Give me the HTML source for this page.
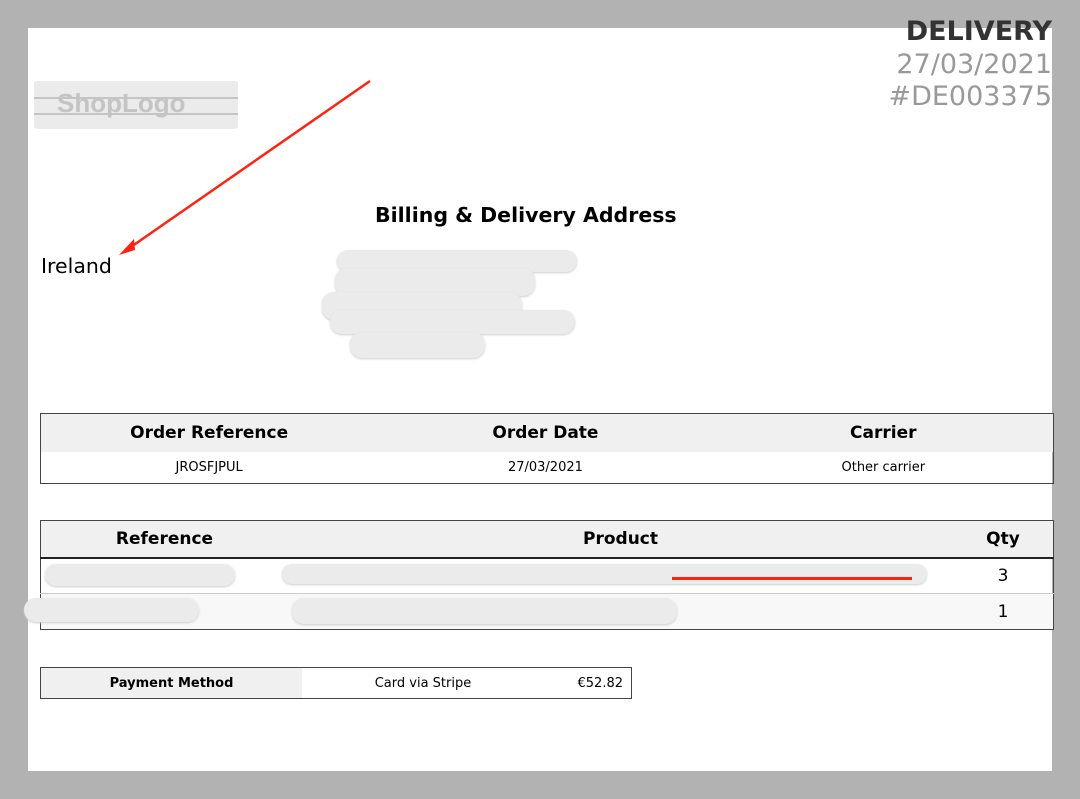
<!DOCTYPE html>
<html><head><style>
body{margin:0;width:1080px;height:799px;background:#b2b2b2;position:relative;overflow:hidden;font-family:"DejaVu Sans",sans-serif;}
.pg{position:absolute;left:28px;top:28px;width:1024px;height:743px;background:#fff;}
.a{position:absolute;}
.blob{position:absolute;background:#ebebeb;border-radius:12px;box-shadow:0 1px 2px #ccc;}
table{border-collapse:collapse;position:absolute;table-layout:fixed;}
</style></head><body>
<div class="pg"></div>
<div class="a" style="right:28px;top:16px;text-align:right;font-size:27px;line-height:32.5px;">
<div style="font-weight:bold;color:#333">DELIVERY</div>
<div style="color:#999">27/03/2021</div>
<div style="color:#999">#DE003375</div>
</div>
<div class="a" style="left:34px;top:81px;width:204px;height:48px;background:#ebebeb;border-radius:3px;"></div>
<div class="a" style="left:34px;top:97px;width:204px;height:2px;background:#c4c4c4"></div>
<div class="a" style="left:34px;top:113px;width:204px;height:2px;background:#c4c4c4"></div>
<div class="a" style="left:57px;top:88px;font-family:'Liberation Sans';font-weight:bold;font-size:26px;color:#c4c4c4;">ShopLogo</div>
<svg class="a" style="left:0;top:0" width="1080" height="799"><line x1="370" y1="81" x2="128" y2="249" stroke="#f21" stroke-width="2.5"/><polygon points="119,255 134,239 135,250" fill="#f21"/></svg>
<div class="a" style="left:41px;top:254px;font-size:20.5px;">Ireland</div>
<div class="a" style="left:375px;top:203px;font-size:20.5px;font-weight:bold;">Billing &amp; Delivery Address</div>
<div class="blob" style="left:337px;top:250px;width:240px;height:22px"></div>
<div class="blob" style="left:335px;top:268px;width:200px;height:28px"></div>
<div class="blob" style="left:322px;top:292px;width:200px;height:28px"></div>
<div class="blob" style="left:330px;top:310px;width:245px;height:24px"></div>
<div class="blob" style="left:350px;top:332px;width:135px;height:26px"></div>
<table style="left:40px;top:413px;width:1014px;border:1px solid #444;font-size:13px;">
<tr style="background:#f0f0f0;height:38px;font-weight:bold;font-size:17px;"><td align=center width=33%>Order Reference</td><td align=center width=33%>Order Date</td><td align=center>Carrier</td></tr>
<tr style="height:32px;"><td align=center>JROSFJPUL</td><td align=center>27/03/2021</td><td align=center>Other carrier</td></tr>
</table>
<table style="left:40px;top:520px;width:1014px;border:1px solid #444;font-size:17px;">
<tr style="background:#f0f0f0;height:37px;font-weight:bold;border-bottom:2px solid #222;"><td align=center width=245>Reference</td><td align=center>Product</td><td align=center width=98>Qty</td></tr>
<tr style="height:36px;border-bottom:1px solid #ccc"><td></td><td></td><td align=center>3</td></tr>
<tr style="height:36px;background:#f8f8f8"><td></td><td></td><td align=center>1</td></tr>
</table>
<div class="blob" style="left:45px;top:564px;width:190px;height:22px"></div>
<div class="blob" style="left:282px;top:564px;width:645px;height:20px"></div>
<div class="a" style="left:672px;top:577px;width:240px;height:3px;background:#f21"></div>
<div class="blob" style="left:24px;top:598px;width:175px;height:24px"></div>
<div class="blob" style="left:292px;top:598px;width:385px;height:26px"></div>
<table style="left:40px;top:667px;width:592px;border:1px solid #444;font-size:13px;">
<tr style="height:31px;"><td align=center width=259 style="background:#f0f0f0;font-weight:bold">Payment Method</td><td align=center width=240>Card via Stripe</td><td align=right style="padding-right:8px">€52.82</td></tr>
</table>
</body></html>
